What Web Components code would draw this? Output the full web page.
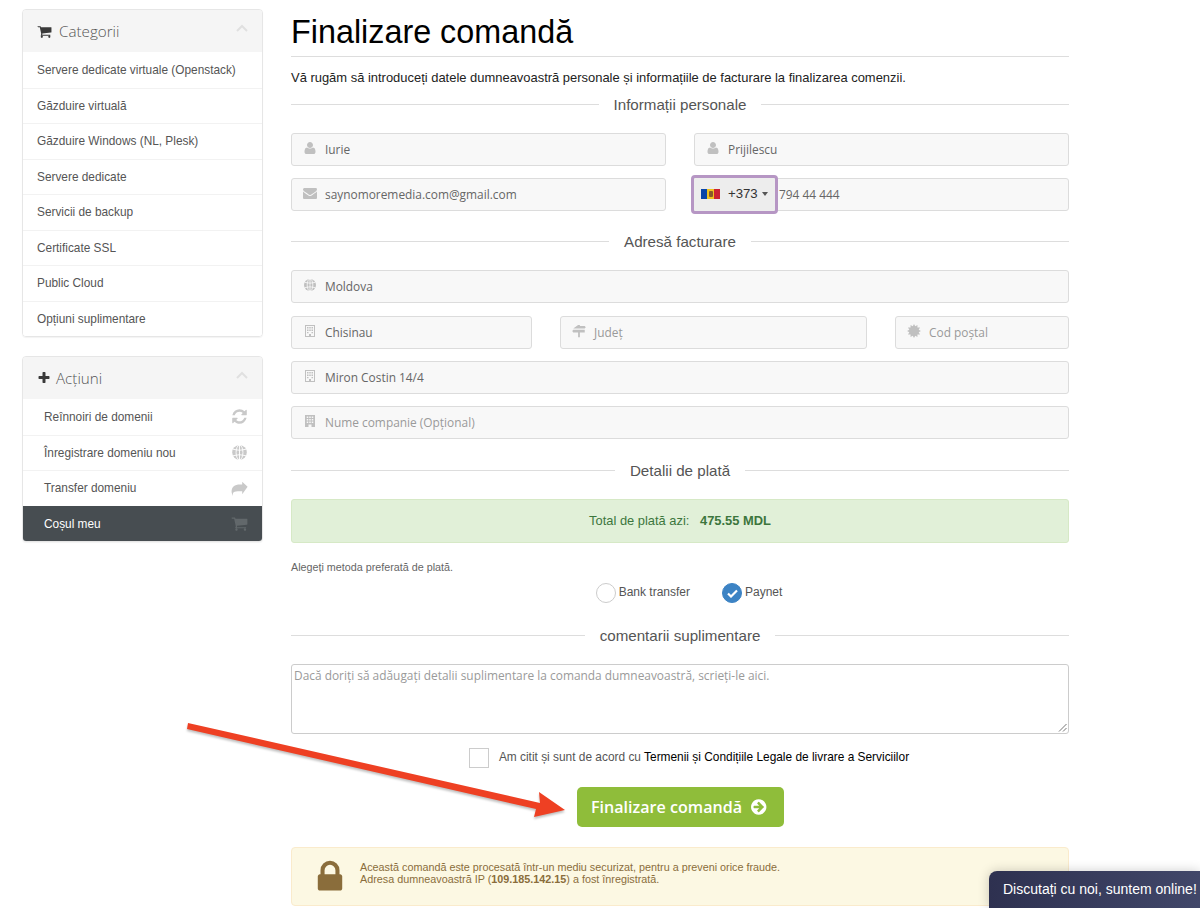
<!DOCTYPE html>
<html lang="ro">
<head>
<meta charset="utf-8">
<title>Finalizare comandă</title>
<style>
    html, body { margin: 0; height: 908px; overflow: hidden; background: #fff; }
    body { font-family: "Liberation Sans", Arial, sans-serif; color: #333; }
</style>
</head>
<body>
<checkout-page>
    <side-panel slot="side" icon="cart" icon-size="15" gap="7" heading="Categorii">
        <panel-item>Servere dedicate virtuale (Openstack)</panel-item>
        <panel-item>Găzduire virtuală</panel-item>
        <panel-item>Găzduire Windows (NL, Plesk)</panel-item>
        <panel-item>Servere dedicate</panel-item>
        <panel-item>Servicii de backup</panel-item>
        <panel-item>Certificate SSL</panel-item>
        <panel-item>Public Cloud</panel-item>
        <panel-item>Opțiuni suplimentare</panel-item>
    </side-panel>
    <side-panel slot="side" icon="plus" icon-size="14" gap="5" heading="Acțiuni">
        <panel-item indent icon="refresh">Reînnoiri de domenii</panel-item>
        <panel-item indent icon="globe">Înregistrare domeniu nou</panel-item>
        <panel-item indent icon="share">Transfer domeniu</panel-item>
        <panel-item indent icon="cart" active>Coșul meu</panel-item>
    </side-panel>

    <page-title>Finalizare comandă</page-title>
    <p class="lead">Vă rugăm să introduceți datele dumneavoastră personale și informațiile de facturare la finalizarea comenzii.</p>

    <section-divider style="margin-top:10px">Informații personale</section-divider>
    <form-row style="margin-top:20px">
        <text-field icon="user">Iurie</text-field>
        <text-field icon="user">Prijilescu</text-field>
    </form-row>
    <form-row style="margin-top:12px">
        <text-field icon="mail">saynomoremedia.com@gmail.com</text-field>
        <phone-field code="+373">794 44 444</phone-field>
    </form-row>

    <section-divider style="margin-top:21px">Adresă facturare</section-divider>
    <text-field icon="globe" style="margin-top:20px">Moldova</text-field>
    <form-row class="address" style="margin-top:13px">
        <text-field icon="building">Chisinau</text-field>
        <text-field icon="signs" muted>Județ</text-field>
        <text-field icon="badge" muted>Cod poștal</text-field>
    </form-row>
    <text-field icon="building" style="margin-top:12px">Miron Costin 14/4</text-field>
    <text-field icon="office" muted style="margin-top:12px">Nume companie (Opțional)</text-field>

    <section-divider style="margin-top:22px">Detalii de plată</section-divider>
    <total-box>Total de plată azi: <b>475.55 MDL</b></total-box>
    <payment-choice></payment-choice>

    <section-divider style="margin-top:23px">comentarii suplimentare</section-divider>
    <notes-box>Dacă doriți să adăugați detalii suplimentare la comanda dumneavoastră, scrieți-le aici.</notes-box>
    <terms-check>Am citit și sunt de acord cu <a>Termenii și Condițiile Legale de livrare a Serviciilor</a></terms-check>
    <submit-button>Finalizare comandă</submit-button>
    <secure-note>Această comandă este procesată într-un mediu securizat, pentru a preveni orice fraude.<br>Adresa dumneavoastră IP (<b>109.185.142.15</b>) a fost înregistrată.</secure-note>
</checkout-page>

<arrow-mark></arrow-mark>
<chat-tab>Discutați cu noi, suntem online!</chat-tab>

<script>
/* Spiky seal for the postal code field */
function sealPoints() {
    const points = [];
    for (let i = 0; i < 24; i++) {
        const radius = i % 2 ? 620 : 890;
        const angle = i * Math.PI / 12;
        points.push(Math.round(896 + radius * Math.cos(angle)) + ',' + Math.round(896 + radius * Math.sin(angle)));
    }
    return points.join(' ');
}

const ICONS = {
    cart: '<path d="M704 1536q0 52-38 90t-90 38-90-38-38-90 38-90 90-38 90 38 38 90zm896 0q0 52-38 90t-90 38-90-38-38-90 38-90 90-38 90 38 38 90zm128-1088v512q0 24-16.5 42.5t-40.5 21.5l-1044 122q13 60 13 70 0 16-24 64h920q26 0 45 19t19 45-19 45-45 19h-1024q-26 0-45-19t-19-45q0-11 8-31.5t16-36 21.5-40 15.5-29.5l-177-823h-204q-26 0-45-19t-19-45 19-45 45-19h256q16 0 28.5 6.5t19.5 15.5 13 24.5 8 26 5.5 29.5 4.5 26h1201q26 0 45 19t19 45z"/>',
    plus: '<path d="M1600 736v192q0 40-28 68t-68 28h-416v416q0 40-28 68t-68 28h-192q-40 0-68-28t-28-68v-416h-416q-40 0-68-28t-28-68v-192q0-40 28-68t68-28h416v-416q0-40 28-68t68-28h192q40 0 68 28t28 68v416h416q40 0 68 28t28 68z"/>',
    refresh: '<path d="M1639 1056q0 5-1 7-64 268-268 434.5t-478 166.5q-146 0-282.5-55t-243.5-157l-129 129q-19 19-45 19t-45-19-19-45v-448q0-26 19-45t45-19h448q26 0 45 19t19 45-19 45l-137 137q71 66 161 102t187 36q134 0 250-65t186-179q11-17 53-117 8-23 30-23h192q13 0 22.5 9.5t9.5 22.5zm25-800v448q0 26-19 45t-45 19h-448q-26 0-45-19t-19-45 19-45l138-138q-148-137-349-137-134 0-250 65t-186 179q-11 17-53 117-8 23-30 23h-199q-13 0-22.5-9.5t-9.5-22.5v-7q65-268 270-434.5t480-166.5q146 0 284 55.5t245 156.5l130-129q19-19 45-19t45 19 19 45z"/>',
    share: '<path d="M1750 700 1180 180v300h-230C380 480 60 760 60 1210c0 150 60 300 130 430 10 20 30 10 25-15-60-280 20-430 730-430h235v320z"/>',
    globe: '<circle cx="896" cy="896" r="768"/><g fill="none" stroke="#fff" stroke-width="95"><ellipse cx="896" cy="896" rx="360" ry="780"/><path d="M896 100v1592M220 560q676 200 1352 0M220 1232q676-200 1352 0"/></g>',
    user: '<path d="M1600 1405q0 120-73 189.5t-194 69.5h-874q-121 0-194-69.5t-73-189.5q0-53 3.5-103.5t14-109 26.5-108.5 43-97.5 62-81 85.5-53.5 111.5-20q9 0 42 21.5t74.5 48 108 48 133.5 21.5 133.5-21.5 108-48 74.5-48 42-21.5q61 0 111.5 20t85.5 53.5 62 81 43 97.5 26.5 108.5 14 109 3.5 103.5zm-320-893q0 159-112.5 271.5t-271.5 112.5-271.5-112.5-112.5-271.5 112.5-271.5 271.5-112.5 271.5 112.5 112.5 271.5z"/>',
    mail: '<path d="M1792 710v794q0 66-47 113t-113 47h-1472q-66 0-113-47t-47-113v-794q44 49 101 87 362 246 497 345 57 42 92.5 65.5t94.5 48 110 24.5h2q51 0 110-24.5t94.5-48 92.5-65.5q170-123 498-345 57-39 100-87zm0-294q0 79-49 151t-122 123q-376 261-468 325-10 7-42.5 30.5t-54 38-52 32.5-57.5 27-50 9h-2q-23 0-50-9t-57.5-27-52-32.5-54-38-42.5-30.5q-91-64-262-182.5t-205-142.5q-62-42-117-115.5t-55-136.5q0-78 41.5-130t118.5-52h1472q65 0 112.5 47t47.5 113z"/>',
    building: '<path fill-rule="evenodd" d="M256 128h1280v1536H256zM384 256v1280h384v-256h256v256h384V256zM512 384h192v192H512zm288 0h192v192H800zm288 0h192v192h-192zM512 704h192v192H512zm288 0h192v192H800zm288 0h192v192h-192zM512 1024h192v160H512zm576 0h192v160h-192z"/>',
    office: '<path fill-rule="evenodd" d="M256 128h1280v1536h-448v-320H704v320H256zM480 320v192h192V320zm320 0v192h192V320zm320 0v192h192V320zM480 640v192h192V640zm320 0v192h192V640zm320 0v192h192V640zM480 960v192h192V960zm640 0v192h192V960zM800 960v192h192V960z"/>',
    signs: '<path d="M780 120h230v120h620l130 170-130 170H160zM160 740h1470v340H1010v600H780v-600H160L30 910z"/>',
    badge: `<polygon points="${sealPoints()}"/>`,
    lock: '<path d="M640 768h512v-192q0-106-75-181t-181-75-181 75-75 181v192zm832 96v576q0 40-28 68t-68 28h-960q-40 0-68-28t-28-68v-576q0-40 28-68t68-28h32v-192q0-184 132-316t316-132 316 132 132 316v192h32q40 0 68 28t28 68z"/>',
    go: '<path d="M1285 896q0-27-18-45l-91-91-362-362q-18-18-45-18t-45 18l-91 91q-18 18-18 45t18 45l189 189h-502q-26 0-45 19t-19 45v128q0 26 19 45t45 19h502l-189 189q-19 19-19 45t19 45l91 91q18 18 45 18t45-18l362-362 91-91q18-18 18-45zm251 0q0 209-103 385.5t-279.5 279.5-385.5 103-385.5-103-279.5-279.5-103-385.5 103-385.5 279.5-279.5 385.5-103 385.5 103 279.5 279.5 103 385.5z"/>'
};

class UiIcon extends HTMLElement {
    connectedCallback() {
        this.attachShadow({ mode: 'open' });
        const size = this.getAttribute('size') || 16;
        this.shadowRoot.innerHTML = `
        <style>
            :host { display: inline-flex; flex: none; width: ${size}px; height: ${size}px; }
            svg { width: 100%; height: 100%; fill: currentColor; display: block; }
        </style>
        <svg viewBox="0 0 1792 1792">${ICONS[this.getAttribute('name')]}</svg>`;
    }
}

class CheckoutPage extends HTMLElement {
    constructor() {
        super();
        this.attachShadow({ mode: 'open' });
    }

    connectedCallback() {
        this.shadowRoot.innerHTML = `
        <style>
            :host { display: flex; gap: 28px; padding: 9px 0 0 22px; align-items: flex-start; }
            aside { width: 241px; flex: none; display: flex; flex-direction: column; gap: 19px; }
            main { width: 778px; flex: none; display: flex; flex-direction: column; }
        </style>
        <aside><slot name="side"></slot></aside>
        <main><slot></slot></main>`;
    }
}

class SidePanel extends HTMLElement {
    connectedCallback() {
        this.attachShadow({ mode: 'open' });
        this.shadowRoot.innerHTML = `
        <style>
            :host {
                display: block;
                border: 1px solid #e6e6e6;
                border-radius: 4px;
                overflow: hidden;
                box-shadow: 0 1px 1px rgba(0,0,0,.05);
            }
            header {
                height: 42px;
                background: #f5f5f5;
                display: flex;
                align-items: center;
                padding: 0 14px;
                gap: ${this.getAttribute('gap')}px;
                font: 300 15.2px "Open Sans", sans-serif;
                color: #555;
            }
            ui-icon { color: #3a3a3a; }
            span { flex: 1; }
            svg { width: 12px; height: 8px; fill: none; stroke: #e0e0e0; stroke-width: 2; margin-bottom: 6px; }
        </style>
        <header>
            <ui-icon name="${this.getAttribute('icon')}" size="${this.getAttribute('icon-size')}"></ui-icon>
            <span>${this.getAttribute('heading')}</span>
            <svg viewBox="0 0 12 8"><path d="M1 7l5-5 5 5"/></svg>
        </header>
        <slot></slot>`;
    }
}

class PanelItem extends HTMLElement {
    connectedCallback() {
        this.attachShadow({ mode: 'open' });
        const active = this.hasAttribute('active');
        const indent = this.hasAttribute('indent');
        const icon = this.getAttribute('icon');
        this.shadowRoot.innerHTML = `
        <style>
            :host {
                display: flex;
                align-items: center;
                justify-content: space-between;
                box-sizing: border-box;
                height: 35.5px;
                padding: 0 14px 0 ${indent ? 21 : 14}px;
                border-top: 1px solid ${active ? '#474d51' : '#f2f2f2'};
                background: ${active ? '#474d51' : '#fff'};
                color: ${active ? '#fff' : '#555'};
                font-size: 11.85px;
            }
            :host(:first-child) { border-top: 0; }
            ui-icon { color: ${active ? '#62686b' : '#c9c9c9'}; }
        </style>
        <span><slot></slot></span>
        ${icon ? `<ui-icon name="${icon}" size="17"></ui-icon>` : ''}`;
    }
}

class PageTitle extends HTMLElement {
    connectedCallback() {
        this.attachShadow({ mode: 'open' });
        this.shadowRoot.innerHTML = `
        <style>
            :host {
                display: block;
                height: 47px;
                border-bottom: 1px solid #ddd;
                font-size: 32.35px;
                line-height: 47px;
                color: #000;
                box-sizing: content-box;
            }
        </style>
        <slot></slot>`;
    }
}

class SectionDivider extends HTMLElement {
    connectedCallback() {
        this.attachShadow({ mode: 'open' });
        this.shadowRoot.innerHTML = `
        <style>
            :host { display: flex; align-items: center; gap: 15px; font-size: 15.15px; color: #555; height: 18px; }
            i { flex: 1; height: 1px; background: #ddd; }
        </style>
        <i></i><span><slot></slot></span><i></i>`;
    }
}

class FormRow extends HTMLElement {
    connectedCallback() {
        this.attachShadow({ mode: 'open' });
        const columns = this.classList.contains('address') ? '241px 1fr 174px' : '1fr 1fr';
        this.shadowRoot.innerHTML = `
        <style>
            :host { display: grid; grid-template-columns: ${columns}; gap: 28px; }
        </style>
        <slot></slot>`;
    }
}

class TextField extends HTMLElement {
    connectedCallback() {
        this.attachShadow({ mode: 'open' });
        const muted = this.hasAttribute('muted');
        this.shadowRoot.innerHTML = `
        <style>
            :host {
                display: flex;
                align-items: center;
                gap: 8px;
                box-sizing: border-box;
                height: 33px;
                padding: 0 0 0 11px;
                background: #f8f8f8;
                border: 1px solid #dcdcdc;
                border-radius: 3px;
                font: 11.9px "Open Sans", sans-serif;
                color: ${muted ? '#9a9a9a' : '#666'};
            }
            ui-icon { color: #c0c0c0; margin-top: -3px; }
            span { margin-top: -1px; }
        </style>
        <ui-icon name="${this.getAttribute('icon')}" size="14"></ui-icon>
        <span><slot></slot></span>`;
    }
}

class PhoneField extends HTMLElement {
    connectedCallback() {
        this.attachShadow({ mode: 'open' });
        this.shadowRoot.innerHTML = `
        <style>
            :host {
                display: flex;
                align-items: center;
                box-sizing: border-box;
                height: 33px;
                background: #f8f8f8;
                border: 1px solid #dcdcdc;
                border-radius: 3px;
                font: 11.9px "Open Sans", sans-serif;
                color: #666;
                position: relative;
            }
            .code {
                position: absolute;
                left: -4px;
                top: -4px;
                box-sizing: border-box;
                width: 87px;
                height: 39px;
                border: 3px solid #b696c4;
                border-radius: 4px;
                background: #ededed;
                display: flex;
                align-items: center;
                gap: 7px;
                padding: 0 0 2px 7px;
                font: 13.2px "Liberation Sans", sans-serif;
                color: #333;
            }
            .flag { display: flex; width: 19px; height: 10px; position: relative; margin-right: 1px; }
            .flag i { flex: 1; }
            .flag u { position: absolute; left: 7.5px; top: 2px; width: 4px; height: 6px; background: #8a5a2a; border-radius: 1px; }
            .caret { width: 0; height: 0; margin-left: -3px; border: 3px solid transparent; border-top: 4px solid #555; border-bottom: 0; }
            .num { padding-left: 84px; margin-top: -1px; }
        </style>
        <div class="code">
            <span class="flag"><i style="background:#0a46a8"></i><i style="background:#f0c420"></i><i style="background:#cc2233"></i><u></u></span>
            <span>${this.getAttribute('code')}</span>
            <span class="caret"></span>
        </div>
        <span class="num"><slot></slot></span>`;
    }
}

class TotalBox extends HTMLElement {
    connectedCallback() {
        this.attachShadow({ mode: 'open' });
        this.shadowRoot.innerHTML = `
        <style>
            :host {
                display: block;
                box-sizing: border-box;
                height: 44px;
                margin-top: 20px;
                background: #e1f0d8;
                border: 1px solid #d6e9c6;
                border-radius: 3px;
                color: #3c763d;
                font-size: 12.9px;
                line-height: 42px;
                text-align: center;
            }
            ::slotted(b) { margin-left: 7px; }
        </style>
        <slot></slot>`;
    }
}

class PaymentChoice extends HTMLElement {
    connectedCallback() {
        this.attachShadow({ mode: 'open' });
        this.shadowRoot.innerHTML = `
        <style>
            :host { display: block; font-size: 12px; color: #555; }
            p { margin: 18px 0 0; font-size: 10.75px; line-height: 13px; color: #666; }
            .opts { display: flex; justify-content: center; gap: 32px; margin-top: 9px; padding-left: 18px; }
            label { display: flex; align-items: center; gap: 3px; height: 20px; }
            .dot { box-sizing: border-box; width: 20px; height: 20px; border: 1px solid #ccc; border-radius: 50%; background: #fff; }
            .on { background: #3c83c4; border-color: #3c83c4; display: flex; align-items: center; justify-content: center; }
            svg { width: 11px; height: 9px; fill: none; stroke: #fff; stroke-width: 2.2; }
            span { margin-top: -2px; }
        </style>
        <p>Alegeți metoda preferată de plată.</p>
        <div class="opts">
            <label><i class="dot"></i><span>Bank transfer</span></label>
            <label><i class="dot on"><svg viewBox="0 0 11 9"><path d="M1 4.5l3 3 6-6"/></svg></i><span>Paynet</span></label>
        </div>`;
    }
}

class NotesBox extends HTMLElement {
    connectedCallback() {
        this.attachShadow({ mode: 'open' });
        this.shadowRoot.innerHTML = `
        <style>
            :host {
                display: block;
                position: relative;
                box-sizing: border-box;
                height: 70px;
                margin-top: 20px;
                padding: 2px 2px;
                border: 1px solid #ccc;
                border-radius: 3px;
                font: 11.9px/17px "Open Sans", sans-serif;
                color: #9a9a9a;
            }
            svg { position: absolute; right: 1px; bottom: 1px; width: 9px; height: 9px; stroke: #777; fill: none; }
        </style>
        <slot></slot>
        <svg viewBox="0 0 9 9"><path d="M8.5 1L1 8.5M8.5 5L5 8.5"/></svg>`;
    }
}

class TermsCheck extends HTMLElement {
    connectedCallback() {
        this.attachShadow({ mode: 'open' });
        this.shadowRoot.innerHTML = `
        <style>
            :host { display: flex; justify-content: center; align-items: center; gap: 10px; margin-top: 14px; padding-left: 18px; font-size: 11.9px; color: #555; height: 20px; }
            i { box-sizing: border-box; width: 20px; height: 20px; border: 1px solid #ccc; background: #fff; }
            span { margin-top: -2px; }
            ::slotted(a) { color: #000; }
        </style>
        <i></i><span><slot></slot></span>`;
    }
}

class SubmitButton extends HTMLElement {
    connectedCallback() {
        this.attachShadow({ mode: 'open' });
        this.shadowRoot.innerHTML = `
        <style>
            :host {
                display: flex;
                align-self: center;
                align-items: center;
                gap: 9px;
                box-sizing: border-box;
                height: 40px;
                width: 207px;
                justify-content: center;
                margin-top: 19px;
                background: #8fbd3a;
                border-radius: 5px;
                color: #fff;
                font: 600 16.1px "Open Sans", sans-serif;
            }
        </style>
        <span><slot></slot></span>
        <ui-icon name="go" size="18"></ui-icon>`;
    }
}

class SecureNote extends HTMLElement {
    connectedCallback() {
        this.attachShadow({ mode: 'open' });
        this.shadowRoot.innerHTML = `
        <style>
            :host {
                display: flex;
                align-items: center;
                gap: 11px;
                box-sizing: border-box;
                height: 59px;
                margin-top: 20px;
                padding: 0 0 0 19px;
                background: #fcf8e3;
                border: 1px solid #faebcc;
                border-radius: 4px;
                color: #8a6d3b;
                font-size: 10.8px;
                line-height: 12px;
            }
            ui-icon { color: #8a6d3b; }
            span { margin-top: -8px; }
        </style>
        <ui-icon name="lock" size="38"></ui-icon>
        <span><slot></slot></span>`;
    }
}

/* Overlays: the red annotation arrow and the chat tab sit on top of the page */
class ArrowMark extends HTMLElement {
    connectedCallback() {
        this.attachShadow({ mode: 'open' });
        this.shadowRoot.innerHTML = `
        <style>
            :host { position: absolute; left: 0; top: 0; width: 1200px; height: 908px; pointer-events: none; }
            svg { width: 100%; height: 100%; filter: drop-shadow(0 2px 1px rgba(0,0,0,.25)); }
        </style>
        <svg viewBox="0 0 1200 908"><polygon fill="#ee4023" points="188,723 540,803 539,792 565,810 534,817 536,809 187,729"/></svg>`;
    }
}

class ChatTab extends HTMLElement {
    connectedCallback() {
        this.attachShadow({ mode: 'open' });
        this.shadowRoot.innerHTML = `
        <style>
            :host {
                position: absolute;
                left: 989px;
                top: 871px;
                width: 211px;
                height: 37px;
                box-sizing: border-box;
                padding: 10px 0 0 14px;
                background: linear-gradient(90deg, #2e3150, #414769);
                border-radius: 8px 0 0 0;
                box-shadow: 0 0 12px rgba(0,0,0,.2);
                color: #fff;
                font: 14px "Liberation Sans", sans-serif;
                white-space: nowrap;
            }
        </style>
        <slot></slot>`;
    }
}

customElements.define('ui-icon', UiIcon);
customElements.define('checkout-page', CheckoutPage);
customElements.define('side-panel', SidePanel);
customElements.define('panel-item', PanelItem);
customElements.define('page-title', PageTitle);
customElements.define('section-divider', SectionDivider);
customElements.define('form-row', FormRow);
customElements.define('text-field', TextField);
customElements.define('phone-field', PhoneField);
customElements.define('total-box', TotalBox);
customElements.define('payment-choice', PaymentChoice);
customElements.define('notes-box', NotesBox);
customElements.define('terms-check', TermsCheck);
customElements.define('submit-button', SubmitButton);
customElements.define('secure-note', SecureNote);
customElements.define('arrow-mark', ArrowMark);
customElements.define('chat-tab', ChatTab);
</script>
<style>
    .lead { margin: 13px 0 0; font-size: 12.94px; line-height: 15px; color: #222; }
</style>
</body>
</html>
